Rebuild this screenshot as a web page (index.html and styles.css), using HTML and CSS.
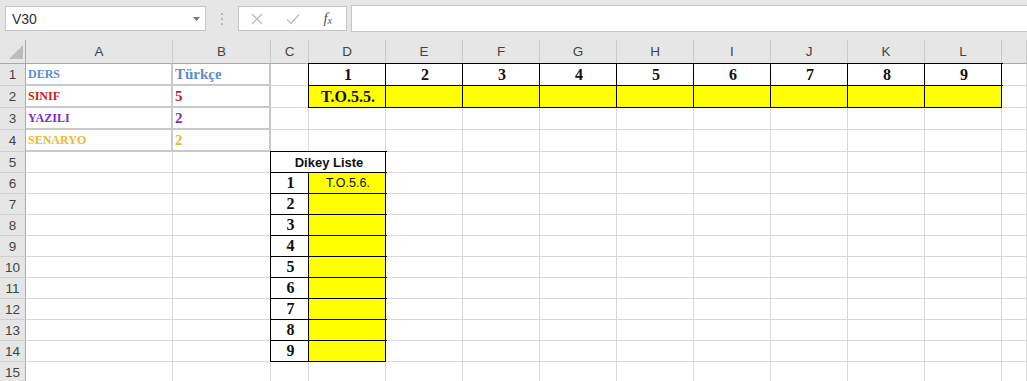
FILE: index.html
```html
<!DOCTYPE html>
<html lang="tr">
<head>
  <meta charset="UTF-8">
  <meta name="viewport" content="width=device-width, initial-scale=1.0">
  <title>Dikey Liste</title>
  <link rel="stylesheet" href="styles.css">
</head>
<body>

<!-- Formula bar -->
<div class="topbar">
  <div class="namebox">
    <span>V30</span>
    <svg class="caret" width="7" height="4" viewBox="0 0 7 4"><path d="M0 0h7L3.5 4z" fill="#777"/></svg>
  </div>
  <div class="grip"><i></i><i></i><i></i></div>
  <div class="fbtns">
    <svg width="12" height="12" viewBox="0 0 12 12"><path d="M1 1l10 10M11 1L1 11" stroke="#bdbdbd" stroke-width="1.4" fill="none"/></svg>
    <svg width="14" height="12" viewBox="0 0 14 12"><path d="M1 6.5l4 4L13 1.5" stroke="#bdbdbd" stroke-width="1.4" fill="none"/></svg>
    <span class="fx">f<sub>x</sub></span>
  </div>
  <div class="formula"></div>
</div>

<!-- Sheet -->
<div class="sheet">
  <!-- column headers -->
  <div class="corner"><svg width="14" height="14" viewBox="0 0 14 14"><path d="M14 0v14H0z" fill="#bcbcbc"/></svg></div>
  <div class="ch">A</div><div class="ch">B</div><div class="ch">C</div><div class="ch">D</div>
  <div class="ch">E</div><div class="ch">F</div><div class="ch">G</div><div class="ch">H</div>
  <div class="ch">I</div><div class="ch">J</div><div class="ch">K</div><div class="ch">L</div><div class="ch"></div>

  <!-- row 1 -->
  <div class="rh">1</div>
  <div class="gb small blue">DERS</div>
  <div class="gb big blue">Türkçe</div>
  <div></div>
  <div class="tb num mid">1</div><div class="tb num mid">2</div><div class="tb num mid">3</div>
  <div class="tb num mid">4</div><div class="tb num mid">5</div><div class="tb num mid">6</div>
  <div class="tb num mid">7</div><div class="tb num mid">8</div><div class="tb num mid">9</div>
  <div></div>

  <!-- row 2 -->
  <div class="rh">2</div>
  <div class="gb small red">SINIF</div>
  <div class="gb big red">5</div>
  <div></div>
  <div class="tb yel num mid">T.O.5.5.</div>
  <div class="tb yel"></div><div class="tb yel"></div><div class="tb yel"></div><div class="tb yel"></div>
  <div class="tb yel"></div><div class="tb yel"></div><div class="tb yel"></div><div class="tb yel"></div>
  <div></div>

  <!-- row 3 -->
  <div class="rh">3</div>
  <div class="gb small purple">YAZILI</div>
  <div class="gb big purple">2</div>
  <div></div><div></div><div></div><div></div><div></div><div></div><div></div><div></div><div></div><div></div><div></div>

  <!-- row 4 -->
  <div class="rh">4</div>
  <div class="gb small gold">SENARYO</div>
  <div class="gb big gold">2</div>
  <div></div><div></div><div></div><div></div><div></div><div></div><div></div><div></div><div></div><div></div><div></div>

  <!-- row 5 -->
  <div class="rh">5</div>
  <div></div><div></div>
  <div class="tb title mid">Dikey Liste</div>
  <div></div><div></div><div></div><div></div><div></div><div></div><div></div><div></div><div></div>

  <!-- rows 6-14 : vertical list -->
  <div class="rh">6</div><div></div><div></div>
  <div class="tb num mid">1</div><div class="tb yel sans mid">T.O.5.6.</div>
  <div></div><div></div><div></div><div></div><div></div><div></div><div></div><div></div><div></div>

  <div class="rh">7</div><div></div><div></div>
  <div class="tb num mid">2</div><div class="tb yel"></div>
  <div></div><div></div><div></div><div></div><div></div><div></div><div></div><div></div><div></div>

  <div class="rh">8</div><div></div><div></div>
  <div class="tb num mid">3</div><div class="tb yel"></div>
  <div></div><div></div><div></div><div></div><div></div><div></div><div></div><div></div><div></div>

  <div class="rh">9</div><div></div><div></div>
  <div class="tb num mid">4</div><div class="tb yel"></div>
  <div></div><div></div><div></div><div></div><div></div><div></div><div></div><div></div><div></div>

  <div class="rh">10</div><div></div><div></div>
  <div class="tb num mid">5</div><div class="tb yel"></div>
  <div></div><div></div><div></div><div></div><div></div><div></div><div></div><div></div><div></div>

  <div class="rh">11</div><div></div><div></div>
  <div class="tb num mid">6</div><div class="tb yel"></div>
  <div></div><div></div><div></div><div></div><div></div><div></div><div></div><div></div><div></div>

  <div class="rh">12</div><div></div><div></div>
  <div class="tb num mid">7</div><div class="tb yel"></div>
  <div></div><div></div><div></div><div></div><div></div><div></div><div></div><div></div><div></div>

  <div class="rh">13</div><div></div><div></div>
  <div class="tb num mid">8</div><div class="tb yel"></div>
  <div></div><div></div><div></div><div></div><div></div><div></div><div></div><div></div><div></div>

  <div class="rh">14</div><div></div><div></div>
  <div class="tb num mid">9</div><div class="tb yel"></div>
  <div></div><div></div><div></div><div></div><div></div><div></div><div></div><div></div><div></div>

  <!-- row 15 -->
  <div class="rh">15</div>
  <div></div><div></div><div></div><div></div><div></div><div></div><div></div><div></div><div></div><div></div><div></div><div></div><div></div>
</div>

</body>
</html>
```

FILE: styles.css
```css
body {
  margin: 0;
  width: 1027px;
  height: 381px;
  overflow: hidden;
  background: #fff;
  font-family: "Liberation Sans", Arial, sans-serif;
  color: #222;
}

/* Formula bar strip */
.topbar {
  display: flex;
  align-items: center;
  height: 40px;
  padding: 0 0 0 5px;
  background: #e6e6e6;
  box-sizing: border-box;
}

.namebox {
  display: flex;
  align-items: center;
  justify-content: space-between;
  width: 201px;
  height: 25px;
  margin-top: -3px;
  padding: 0 5px 0 6px;
  box-sizing: border-box;
  background: #fff;
  border: 1px solid #c6c6c6;
  font-size: 14px;
  color: #333;
}

.grip {
  display: flex;
  flex-direction: column;
  gap: 3px;
  width: 32px;
  align-items: center;
  margin-top: -3px;
}

.grip i {
  width: 2px;
  height: 2px;
  background: #b9b9b9;
}

.fbtns {
  display: flex;
  align-items: center;
  justify-content: space-between;
  width: 109px;
  height: 25px;
  margin-top: -3px;
  padding: 0 14px 0 12px;
  box-sizing: border-box;
  background: #fff;
  border: 1px solid #c6c6c6;
}

.fx {
  font-family: "Liberation Serif", serif;
  font-style: italic;
  font-size: 15px;
  color: #555;
}

.fx sub {
  font-size: 10px;
  vertical-align: -1px;
}

.formula {
  flex: 1;
  height: 25px;
  margin-top: -3px;
  margin-left: 4px;
  background: #fff;
  border: 1px solid #c6c6c6;
  border-right: none;
}

/* Grid */
.sheet {
  display: grid;
  grid-template-columns: 26px 147px 98px 38px 77px repeat(8, 77px) 1fr;
  grid-template-rows: 24px repeat(4, 22px) repeat(11, 21px);
}

.sheet > div {
  display: flex;
  align-items: center;
  box-sizing: border-box;
  padding-left: 2px;
  overflow: hidden;
  white-space: nowrap;
  background: #fff;
  border-right: 1px solid #d8d8d8;
  border-bottom: 1px solid #d8d8d8;
}

.sheet > .corner {
  align-items: flex-end;
  justify-content: flex-end;
  padding: 0 2px 4px 0;
  background: #e6e6e6;
  border-right-color: #ababab;
  border-bottom-color: #ababab;
}

.sheet > .ch {
  justify-content: center;
  padding: 0;
  background: #e6e6e6;
  border-right-color: #c9c9c9;
  border-bottom-color: #ababab;
  font-size: 13.5px;
  color: #444;
}

.sheet > .rh {
  justify-content: center;
  padding: 0;
  background: #e6e6e6;
  border-right-color: #ababab;
  border-bottom-color: #cfcfcf;
  font-size: 13.5px;
  color: #444;
}

/* Grey framed cells A1:B4 */
.sheet > .gb {
  border-right: 2px solid #c9c9c9;
  border-bottom: 2px solid #c9c9c9;
}

/* Black framed tables */
.sheet > .tb {
  border-right-color: #000;
  border-bottom-color: #000;
  box-shadow: 0 0 0 1px #000;
}

.sheet > .yel {
  background: #ffff00;
}

.sheet > .title {
  grid-column: span 2;
  font-weight: bold;
  font-size: 13px;
  color: #111;
}

.mid {
  justify-content: center;
}

.small {
  font-family: "Liberation Serif", serif;
  font-weight: bold;
  font-size: 12px;
}

.big {
  font-family: "Liberation Serif", serif;
  font-weight: bold;
  font-size: 15px;
}

.num {
  font-family: "Liberation Serif", serif;
  font-weight: bold;
  font-size: 16px;
  color: #111;
}

.sans {
  font-size: 12.5px;
  color: #111;
}

.blue { color: #5b8bd2; }
.red { color: #c81a1a; }
.purple { color: #7d2ccc; }
.gold { color: #ebb933; }
```
